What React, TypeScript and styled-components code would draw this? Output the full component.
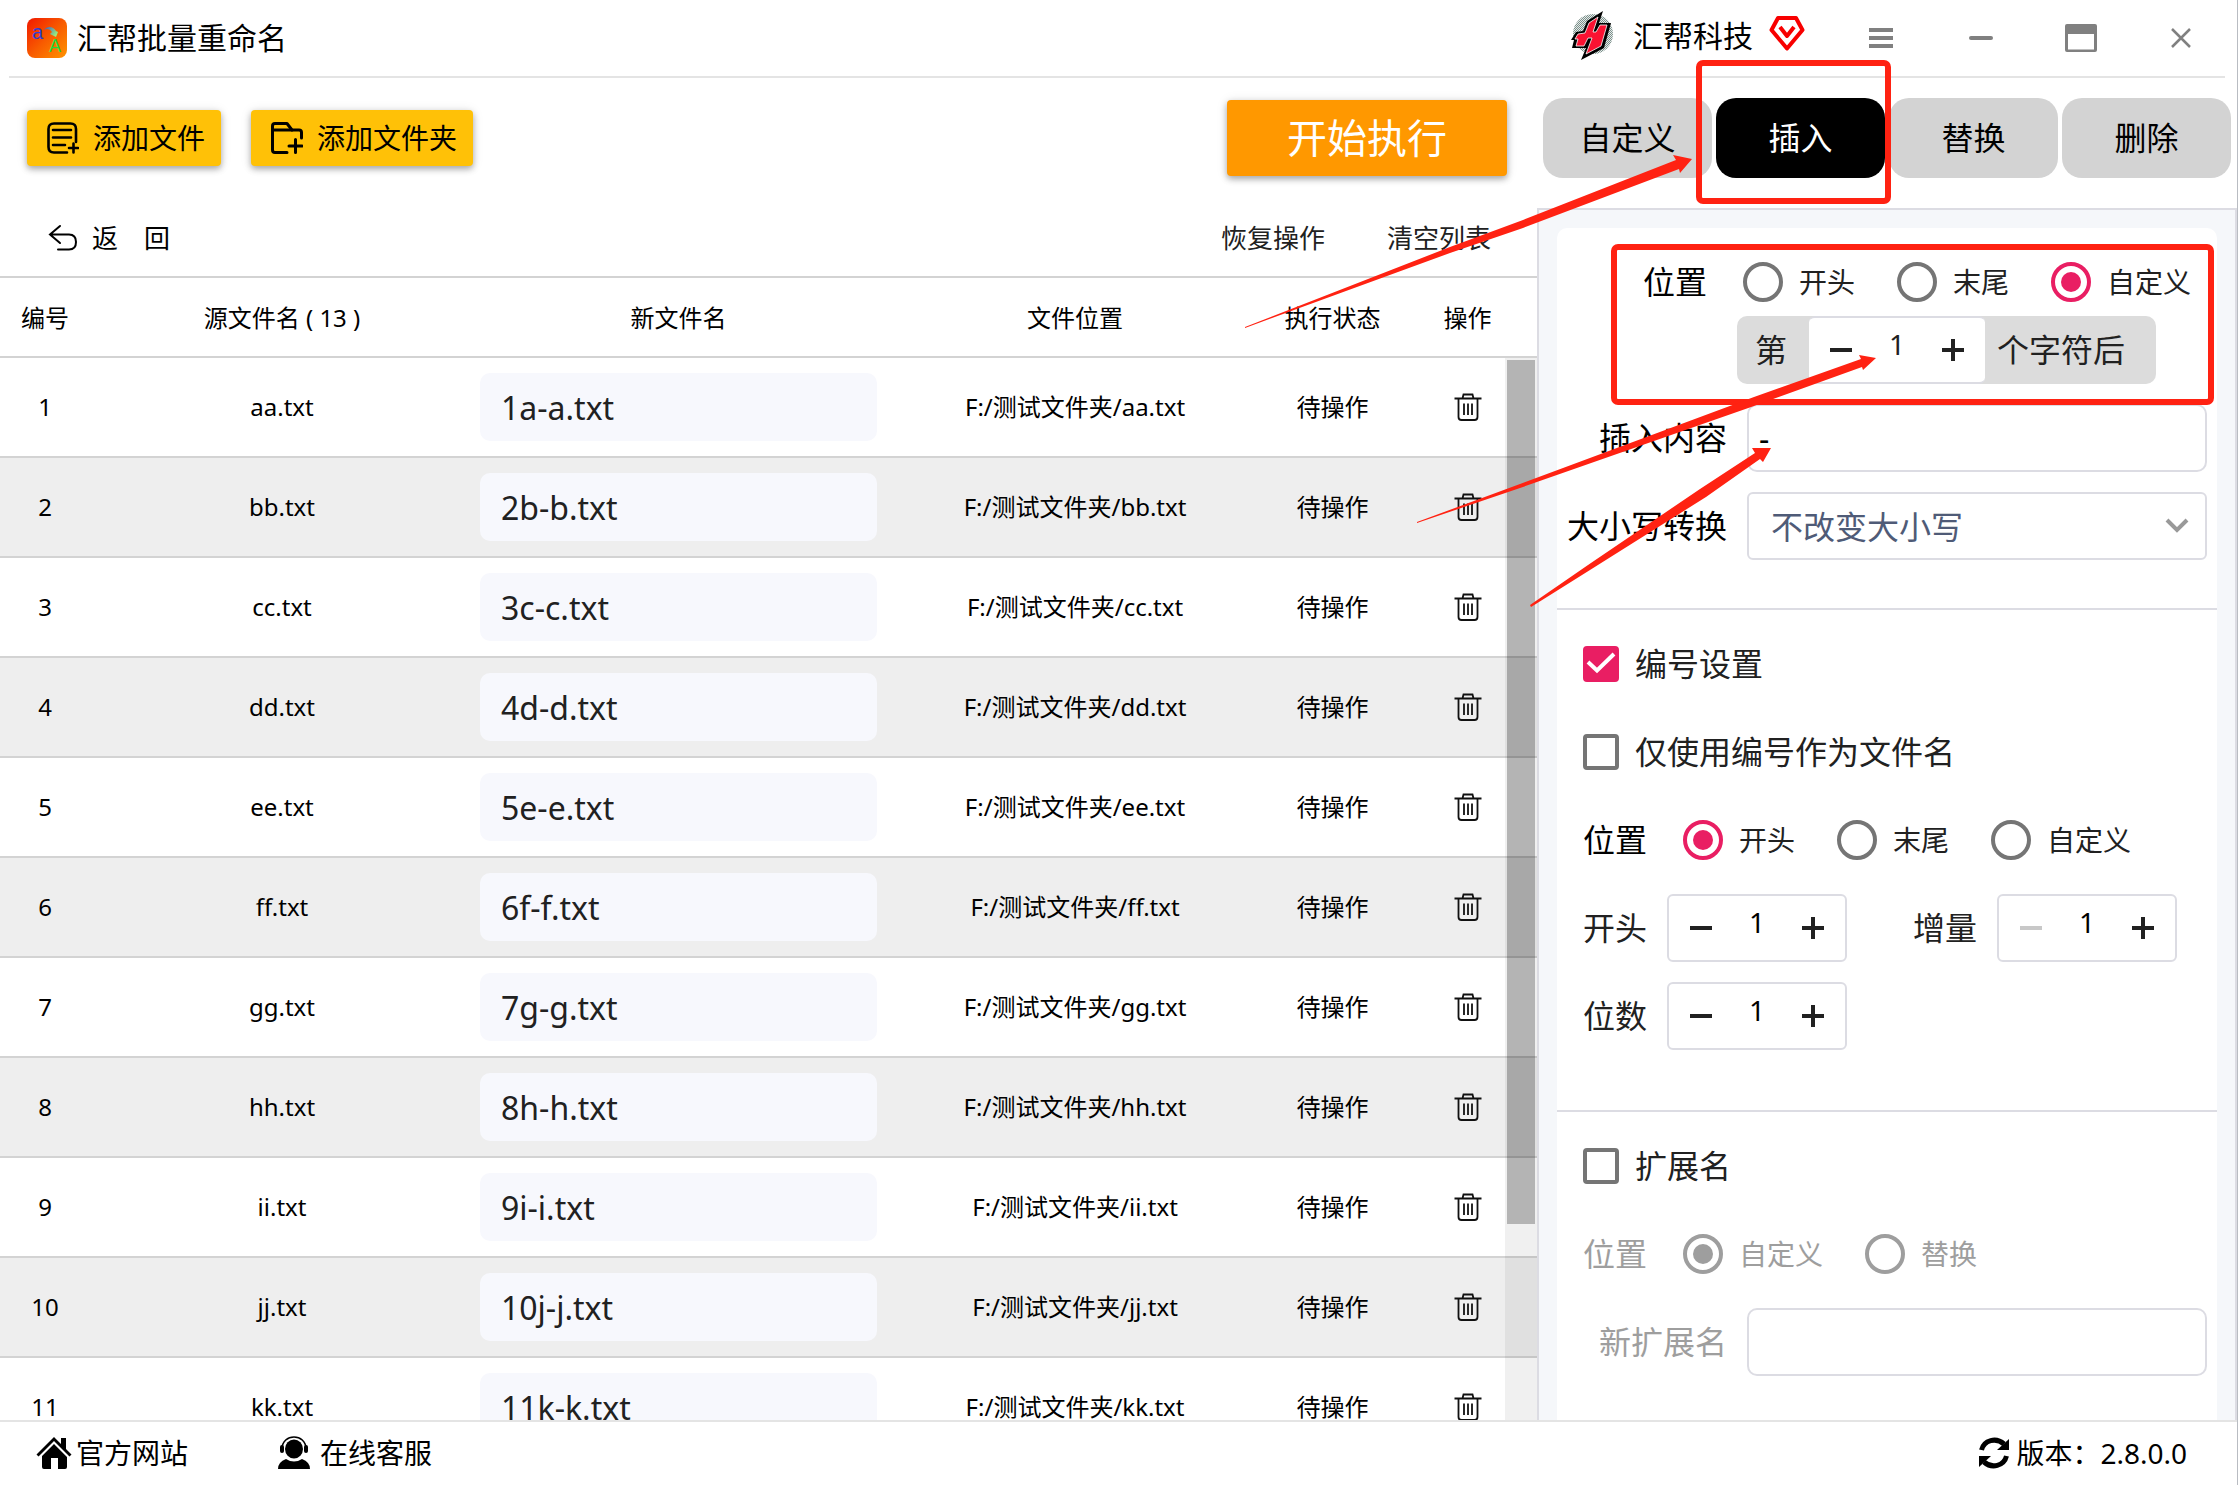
import React from "react";
import styled, { createGlobalStyle } from "styled-components";

const ink = "#212121";
const line = "#d3d3d3";
const panelLine = "#dcdce3";
const pink = "#e91e63";
const grey = "#757575";
const muted = "#9e9e9e";

const GlobalStyle = createGlobalStyle`
  *, *::before, *::after { box-sizing: border-box; }
  html, body, #root { height: 100%; }
  body {
    margin: 0;
    background: #fff;
    color: #000;
    font-family: "Noto Sans", "Noto Sans CJK SC", sans-serif;
    font-size: 24px;
    overflow: hidden;
  }
  button, input, select {
    font-family: inherit;
    color: inherit;
    margin: 0;
  }
  button { border: 0; padding: 0; background: none; cursor: pointer; }
  fieldset { border: 0; margin: 0; padding: 0; min-width: 0; }
`;

const Window = styled.div`
  position: relative;
  height: 100vh;
  display: flex;
  flex-direction: column;
  border-right: 1px solid #b9bcc2;
  white-space: nowrap;
`;

const TitleBar = styled.header`
  flex: none;
  height: 78px;
  margin: 0 12px 0 9px;
  padding: 0 24px 0 18px;
  border-bottom: 2px solid #e4e4e4;
  display: flex;
  align-items: center;
`;

const AppTitle = styled.h1`
  flex: 1;
  display: flex;
  align-items: center;
  gap: 10px;
  margin: 0;
  font-size: 30px;
  line-height: 40px;
  font-weight: 400;
`;

const Account = styled.a`
  display: flex;
  align-items: center;
  gap: 16px;
  padding-bottom: 4px;
  margin-right: 56px;
  font-size: 30px;
  line-height: 40px;
  color: #000;
  text-decoration: none;
`;

const AccountName = styled.span`
  margin-left: 2px;
`;

const WindowControls = styled.div`
  display: flex;
  gap: 60px;
`;

const WindowButton = styled.button`
  width: 40px;
  height: 40px;
  display: grid;
  place-items: center;
  color: #808080;
`;

const Body = styled.div`
  flex: 1;
  min-height: 0;
  display: flex;
`;

const Files = styled.main`
  flex: 1;
  min-width: 0;
  display: flex;
  flex-direction: column;
`;

const Toolbar = styled.div`
  flex: none;
  height: 120px;
  padding: 0 30px 0 27px;
  display: flex;
  align-items: center;
  gap: 30px;
`;

const AddButton = styled.button`
  height: 56px;
  padding: 0 16px 0 20px;
  display: flex;
  align-items: center;
  gap: 14px;
  border-radius: 4px;
  background: #ffc107;
  box-shadow: 0 3px 6px rgba(0, 0, 0, 0.3), 0 1px 12px rgba(0, 0, 0, 0.1);
  font-size: 28px;
  line-height: 40px;
`;

const StartButton = styled.button`
  width: 280px;
  height: 76px;
  margin-left: auto;
  border-radius: 4px;
  background: #ff9800;
  box-shadow: 0 3px 6px rgba(0, 0, 0, 0.3), 0 1px 12px rgba(0, 0, 0, 0.1);
  color: #fff;
  font-size: 40px;
  line-height: 56px;
`;

const SubBar = styled.div`
  flex: none;
  height: 80px;
  padding: 2px 46px 0 48px;
  border-bottom: 2px solid ${line};
  display: flex;
  align-items: center;
  gap: 62px;
`;

const TextButton = styled.button`
  display: flex;
  align-items: center;
  color: ${ink};
  font-size: 26px;
  line-height: 36px;
`;

const BackButton = styled(TextButton)`
  gap: 14px;
  margin-right: auto;
  color: #000;
  white-space: pre;
`;

const Table = styled.table`
  width: 100%;
  table-layout: fixed;
  border-collapse: separate;
  border-spacing: 0;
  text-align: center;
  font-size: 24px;
  line-height: 34px;
`;

const HeadCell = styled.th`
  height: 80px;
  padding: 2px 0 0;
  border-bottom: 2px solid ${line};
  font-weight: 400;
`;

const Row = styled.tr<{ $shaded: boolean }>`
  background: ${(p) => (p.$shaded ? "#eee" : "#fff")};
`;

const Cell = styled.td`
  height: 100px;
  padding: 0;
  border-bottom: 2px solid ${line};
`;

const ListArea = styled.div`
  position: relative;
  flex: 1;
  min-height: 0;
  overflow: hidden;
`;

const NameInput = styled.input`
  display: block;
  width: 397px;
  height: 68px;
  margin: 0 auto;
  padding: 0 21px;
  border: 0;
  border-radius: 10px;
  background: #f7f8fd;
  color: ${ink};
  font-size: 32px;
`;

const DeleteButton = styled.button`
  width: 40px;
  height: 40px;
  display: inline-grid;
  place-items: center;
  vertical-align: middle;
`;

const ScrollTrack = styled.div`
  position: absolute;
  top: 0;
  right: 0;
  bottom: 0;
  width: 32px;
  padding: 2px;
  background: rgba(0, 0, 0, 0.06);
`;

const ScrollThumb = styled.div`
  height: 864px;
  background: rgba(0, 0, 0, 0.25);
`;

const Side = styled.aside`
  flex: none;
  width: 700px;
  display: flex;
  flex-direction: column;
`;

const Tabs = styled.div`
  flex: none;
  height: 130px;
  padding: 20px 6px 0;
  display: flex;
  gap: 4px;
`;

const Tab = styled.button<{ $active?: boolean }>`
  flex: 1;
  height: 80px;
  border-radius: 20px;
  background: ${(p) => (p.$active ? "#000" : "#d3d3d3")};
  color: ${(p) => (p.$active ? "#fff" : "#000")};
  font-size: 32px;
  line-height: 44px;
`;

const Panel = styled.div`
  flex: 1;
  min-height: 0;
  overflow: hidden;
  padding: 18px;
  border: 2px solid ${panelLine};
  border-bottom: 0;
  background: #f5f7fa;
`;

const Card = styled.div`
  min-height: 1400px;
  border-radius: 10px;
  background: #fff;
`;

const Section = styled.section<{ $end: number }>`
  padding: 20px 10px ${(p) => p.$end}px;
  border-bottom: 2px solid ${panelLine};
  &:last-child { border-bottom: 0; }
`;

const Line = styled.div<{ $indent?: number; $tight?: boolean }>`
  height: 68px;
  margin-bottom: ${(p) => (p.$tight ? 0 : 20)}px;
  padding-left: ${(p) => p.$indent ?? 0}px;
  display: flex;
  align-items: center;
  &:last-child { margin-bottom: 0; }
`;

const FieldLabel = styled.label`
  width: 160px;
  margin-right: 20px;
  text-align: right;
  font-size: 32px;
  line-height: 44px;
`;

const MutedFieldLabel = styled(FieldLabel)`
  color: ${muted};
`;

const TextInput = styled.input`
  flex: 1;
  min-width: 0;
  height: 68px;
  padding: 0 10px;
  border: 2px solid ${panelLine};
  border-radius: 10px;
  background: #fff;
  font-size: 32px;
`;

const SelectWrap = styled.div`
  flex: 1;
  display: grid;
  align-items: center;
  & > * { grid-area: 1 / 1; }
  & > svg { justify-self: end; margin-right: 18px; pointer-events: none; }
`;

const Select = styled.select`
  appearance: none;
  width: 100%;
  height: 68px;
  padding: 0 22px;
  border: 2px solid ${panelLine};
  border-radius: 6px;
  background: #fff;
  color: #4f5b77;
  font-size: 32px;
`;

const RadioRow = styled.fieldset<{ $muted?: boolean }>`
  display: flex;
  align-items: center;
  gap: 42px;
  color: ${(p) => (p.$muted ? muted : ink)};
`;

const RadioTitle = styled.span<{ $muted?: boolean }>`
  margin-right: 36px;
  color: ${(p) => (p.$muted ? muted : "#000")};
  font-size: 32px;
  line-height: 44px;
`;

const RadioLabel = styled.label`
  display: flex;
  align-items: center;
  gap: 16px;
  font-size: 28px;
  line-height: 40px;
`;

const Radio = styled.input.attrs({ type: "radio" })`
  appearance: none;
  width: 40px;
  height: 40px;
  border: 4px solid ${grey};
  border-radius: 50%;
  display: grid;
  place-items: center;
  &:checked { border-color: ${pink}; }
  &:checked::before {
    content: "";
    width: 20px;
    height: 20px;
    border-radius: 50%;
    background: ${pink};
  }
  &:disabled { border-color: ${muted}; }
  &:disabled::before { background: ${muted}; }
`;

const CheckLabel = styled.label`
  display: flex;
  align-items: center;
  gap: 16px;
  color: ${ink};
  font-size: 32px;
  line-height: 44px;
`;

const CheckBox = styled.span`
  display: grid;
  width: 36px;
  height: 36px;
  & > * { grid-area: 1 / 1; }
  & > svg { pointer-events: none; }
`;

const CheckInput = styled.input.attrs({ type: "checkbox" })`
  appearance: none;
  width: 36px;
  height: 36px;
  border: 4px solid ${grey};
  border-radius: 4px;
  &:checked { border-color: ${pink}; background: ${pink}; }
`;

const StepBox = styled.div<{ $joined?: boolean }>`
  width: ${(p) => (p.$joined ? 176 : 180)}px;
  height: 68px;
  padding: 0 12px;
  border: 2px solid ${panelLine};
  border-width: ${(p) => (p.$joined ? "2px 0" : "2px")};
  border-radius: 6px;
  background: #fff;
  display: flex;
  align-items: center;
  justify-content: space-between;
`;

const StepButton = styled.button`
  width: 40px;
  height: 40px;
  display: grid;
  place-items: center;
  color: ${ink};
  &:disabled { color: #c8c8c8; }
`;

const StepValue = styled.input`
  flex: 1;
  min-width: 0;
  height: 48px;
  margin-bottom: 12px;
  padding: 0;
  border: 0;
  background: none;
  text-align: center;
  font-size: 28px;
`;

const StepLabel = styled.label<{ $push?: boolean }>`
  margin-left: ${(p) => (p.$push ? 66 : 0)}px;
  margin-right: 20px;
  color: ${ink};
  font-size: 32px;
  line-height: 44px;
`;

const StepGroup = styled.div`
  height: 68px;
  display: flex;
  border-radius: 10px;
  background: #dcdcdc;
  overflow: hidden;
  color: ${ink};
  font-size: 32px;
  line-height: 68px;
`;

const StepCaption = styled.label<{ $before: number; $after: number }>`
  padding: 0 ${(p) => p.$after}px 0 ${(p) => p.$before}px;
`;

const Footer = styled.footer`
  flex: none;
  height: 65px;
  padding: 0 50px 2px 36px;
  border-top: 2px solid #e4e4e4;
  background: #fff;
  display: flex;
  align-items: center;
  gap: 90px;
  font-size: 28px;
  line-height: 40px;
`;

const FooterLink = styled.a<{ $gap: number }>`
  display: flex;
  align-items: center;
  gap: ${(p) => p.$gap}px;
  color: #000;
  text-decoration: none;
`;

const Version = styled.div`
  margin-left: auto;
  display: flex;
  align-items: center;
  gap: 6px;
`;

const Markup = styled.svg`
  position: absolute;
  top: 0;
  left: 0;
  pointer-events: none;
`;

function AppLogo() {
  return (
    <svg width="40" height="40" viewBox="0 0 40 40" aria-hidden="true">
      <defs>
        <linearGradient id="appBg" x1="0" y1="0" x2="1" y2="1">
          <stop offset="0" stopColor="#f01800" />
          <stop offset="0.5" stopColor="#f85a00" />
          <stop offset="1" stopColor="#ff9400" />
        </linearGradient>
        <linearGradient id="appArrow" x1="0" y1="0" x2="1" y2="0.6">
          <stop offset="0" stopColor="#3a55c8" />
          <stop offset="1" stopColor="#9cf07a" />
        </linearGradient>
      </defs>
      <rect width="40" height="40" rx="8" fill="url(#appBg)" />
      <text x="5" y="21" fontFamily="Liberation Sans" fontSize="20" fill="#2e3fd6">a</text>
      <text x="22" y="34" fontFamily="Liberation Sans" fontSize="18" fill="#1fdc3a">A</text>
      <path d="M17 12 C20 8 26 8 29 13 L31 14 L29 19 L23 16 L25 14 C23 11 20 10 17 12 Z" fill="url(#appArrow)" />
    </svg>
  );
}

function BrandLogo() {
  return (
    <svg width="44" height="50" viewBox="0 0 44 50" aria-hidden="true">
      <defs>
        <pattern id="mesh" width="2" height="2" patternUnits="userSpaceOnUse">
          <rect width="2" height="2" fill="#e4ebe9" />
          <rect width="1" height="1" fill="#7d8f8b" />
          <rect x="1" y="1" width="1" height="1" fill="#7d8f8b" />
        </pattern>
      </defs>
      <circle cx="22" cy="23" r="20" fill="url(#mesh)" />
      <path d="M32 0 L16 10 L12 20 L5 21 L0 29 L3 29 L1 37 L15 37 L10 49 L33 37 L40 12 L28 12 Z" fill="#000" />
      <path d="M27 6 L18 12 L14 22 L7 23 L4 28 L7 28 L5 35 L13 35 L17 27 L21 27 L15 43 L30 35 L36 14 L29 14 L25 21 L22 21 Z" fill="#fa1232" stroke="#fff" strokeWidth="0.8" />
    </svg>
  );
}

function Vip() {
  return (
    <svg width="36" height="40" viewBox="0 0 36 40" fill="none" stroke="#f80000" strokeWidth="4" strokeLinejoin="round" aria-hidden="true">
      <path d="M9 2 H27 L33.500 14 L18 32.500 L2.500 14 Z" />
      <path d="M11 11 L18 20 L25 11" />
    </svg>
  );
}

const FileAdd = () => (
  <svg width="32" height="32" viewBox="0 0 32 32" fill="none" stroke="#000" strokeWidth="2.600" strokeLinecap="round" aria-hidden="true">
    <path d="M29 20 V7 Q29 1.500 23.500 1.500 H7 Q1.500 1.500 1.500 7 V25 Q1.500 30.500 7 30.500 H20" />
    <path d="M6 8 H24 M6 15.500 H24 M6 23 H18 M22 26 H31 M26.500 21.500 V30.500" />
  </svg>
);

const FolderAdd = () => (
  <svg width="32" height="32" viewBox="0 0 32 32" fill="none" stroke="#000" strokeWidth="3" strokeLinecap="round" strokeLinejoin="round" aria-hidden="true">
    <path d="M16 30.500 H4 Q1.500 30.500 1.500 28 V4 Q1.500 1.500 4 1.500 H16 L21 8 H28 Q30.500 8 30.500 10.500 V16" />
    <path d="M2 8 H21 M18 24 H31 M24.500 17.500 V30.500" />
  </svg>
);

const BackArrow = () => (
  <svg width="30" height="28" viewBox="0 0 30 28" fill="none" stroke="#000" strokeWidth="2" strokeLinecap="round" aria-hidden="true">
    <path d="M12 2 L2 10.500 L12 19 M2 10.500 H21 Q28 10.500 28 18 Q28 25.500 21 25.500 H10" />
  </svg>
);

const Trash = () => (
  <svg width="28" height="28" viewBox="0 0 28 28" fill="none" stroke="#111" strokeWidth="1.800" aria-hidden="true">
    <path d="M0.500 5.500 H27.500 M8.500 5.500 L9.500 1.500 H18.500 L19.500 5.500" />
    <path d="M4.500 6 V24 Q4.500 27 7.500 27 H20.500 Q23.500 27 23.500 24 V6" />
    <path d="M10 10.500 V22 M14 10.500 V22 M18 10.500 V22" />
  </svg>
);

const Minus = () => (
  <svg width="24" height="24" viewBox="0 0 24 24" aria-hidden="true">
    <path d="M1 10 H23 V14 H1 Z" fill="currentColor" />
  </svg>
);

const Plus = () => (
  <svg width="24" height="24" viewBox="0 0 24 24" aria-hidden="true">
    <path d="M1 10 H10 V1 H14 V10 H23 V14 H14 V23 H10 V14 H1 Z" fill="currentColor" />
  </svg>
);

const Home = () => (
  <svg width="36" height="34" viewBox="0 0 36 34" aria-hidden="true">
    <path d="M18 1 L25 8 V2 H30 V13 L35.500 18.500 L33.500 20.500 L18 5 L2.500 20.500 L0.500 18.500 Z" fill="#000" />
    <path d="M18 8 L31 21 V31 Q31 33 29 33 H22 V22 H15 V33 H8 Q6 33 6 31 V20 Z" fill="#000" />
  </svg>
);

const Agent = () => (
  <svg width="32" height="34" viewBox="0 0 32 34" aria-hidden="true">
    <path d="M4 13 C4 -3 28 -3 28 13" fill="none" stroke="#000" strokeWidth="1.600" />
    <ellipse cx="16" cy="13" rx="9" ry="9.500" fill="#000" />
    <rect x="2" y="9" width="4" height="8" rx="2" fill="#000" />
    <rect x="26" y="9" width="4" height="8" rx="2" fill="#000" />
    <path d="M0 33 Q0 26 8 23 Q16 28 24 23 Q32 26 32 33 Z" fill="#000" />
  </svg>
);

const Refresh = () => (
  <svg width="32" height="32" viewBox="0 0 32 32" aria-hidden="true">
    <path d="M3.500 13 C6 3 18 0 26 7" fill="none" stroke="#000" strokeWidth="5" />
    <path d="M31 2 V13 H19 Z" fill="#000" />
    <path d="M28.500 19 C26 29 14 32 6 25" fill="none" stroke="#000" strokeWidth="5" />
    <path d="M1 30 V19 H13 Z" fill="#000" />
  </svg>
);

const columns = [90, 384, 409, 384, 131, 139];

function Columns() {
  return (
    <colgroup>
      {columns.map((w, i) => (
        <col key={i} width={`${(w / 1537) * 100}%`} />
      ))}
    </colgroup>
  );
}

const headings = ["编号", "源文件名 ( 13 )", "新文件名", "文件位置", "执行状态", "操作"];
const files = "abcdefghijk".split("").map((c, i) => ({
  no: i + 1,
  source: `${c}${c}.txt`,
  renamed: `${i + 1}${c}-${c}.txt`,
}));

function Choices(props: { title: string; name: string; options: string[]; value: string; disabled?: boolean }) {
  const { title, name, options, value, disabled } = props;
  return (
    <>
      <RadioTitle $muted={disabled}>{title}</RadioTitle>
      <RadioRow $muted={disabled} aria-label={title}>
        {options.map((o) => (
          <RadioLabel key={o}>
            <Radio name={name} value={o} defaultChecked={o === value} disabled={disabled} />
            {o}
          </RadioLabel>
        ))}
      </RadioRow>
    </>
  );
}

function Check({ text, checked }: { text: string; checked?: boolean }) {
  return (
    <CheckLabel>
      <CheckBox>
        <CheckInput defaultChecked={checked} />
        {checked && (
          <svg width="36" height="36" viewBox="0 0 36 36" fill="none" stroke="#fff" strokeWidth="4" aria-hidden="true">
            <path d="M5 16 L14 24.500 L31 8" />
          </svg>
        )}
      </CheckBox>
      {text}
    </CheckLabel>
  );
}

function Stepper({ id, joined, atMin }: { id: string; joined?: boolean; atMin?: boolean }) {
  return (
    <StepBox $joined={joined}>
      <StepButton aria-label="减少" disabled={atMin}><Minus /></StepButton>
      <StepValue id={id} defaultValue="1" />
      <StepButton aria-label="增加"><Plus /></StepButton>
    </StepBox>
  );
}

export default function App() {
  return (
    <>
      <GlobalStyle />
      <Window>
        <TitleBar>
          <AppTitle><AppLogo />汇帮批量重命名</AppTitle>
          <Account href="#account">
            <BrandLogo />
            <AccountName>汇帮科技</AccountName>
            <Vip />
          </Account>
          <WindowControls>
            <WindowButton aria-label="菜单">
              <svg width="24" height="20" viewBox="0 0 24 20"><path d="M0 0 H24 V4 H0 Z M0 8 H24 V12 H0 Z M0 16 H24 V20 H0 Z" fill="currentColor" /></svg>
            </WindowButton>
            <WindowButton aria-label="最小化">
              <svg width="24" height="4" viewBox="0 0 24 4"><rect width="24" height="4" rx="2" fill="currentColor" /></svg>
            </WindowButton>
            <WindowButton aria-label="最大化">
              <svg width="32" height="28" viewBox="0 0 32 28"><path fillRule="evenodd" d="M2 0 H30 Q32 0 32 2 V26 Q32 28 30 28 H2 Q0 28 0 26 V2 Q0 0 2 0 Z M3 10 V25.500 H29 V10 Z" fill="currentColor" /></svg>
            </WindowButton>
            <WindowButton aria-label="关闭">
              <svg width="20" height="20" viewBox="0 0 20 20" stroke="currentColor" strokeWidth="2.500"><path d="M1 1 L19 19 M19 1 L1 19" /></svg>
            </WindowButton>
          </WindowControls>
        </TitleBar>

        <Body>
          <Files>
            <Toolbar>
              <AddButton><FileAdd />添加文件</AddButton>
              <AddButton><FolderAdd />添加文件夹</AddButton>
              <StartButton>开始执行</StartButton>
            </Toolbar>
            <SubBar>
              <BackButton><BackArrow />{"返\u3000回"}</BackButton>
              <TextButton>恢复操作</TextButton>
              <TextButton>清空列表</TextButton>
            </SubBar>
            <Table>
              <Columns />
              <thead>
                <tr>{headings.map((h) => <HeadCell key={h} scope="col">{h}</HeadCell>)}</tr>
              </thead>
            </Table>
            <ListArea>
              <Table>
                <Columns />
                <tbody>
                  {files.map((f) => (
                    <Row key={f.no} $shaded={f.no % 2 === 0}>
                      <Cell>{f.no}</Cell>
                      <Cell>{f.source}</Cell>
                      <Cell><NameInput aria-label="新文件名" defaultValue={f.renamed} /></Cell>
                      <Cell>F:/测试文件夹/{f.source}</Cell>
                      <Cell>待操作</Cell>
                      <Cell><DeleteButton aria-label="删除"><Trash /></DeleteButton></Cell>
                    </Row>
                  ))}
                </tbody>
              </Table>
              <ScrollTrack><ScrollThumb /></ScrollTrack>
            </ListArea>
          </Files>

          <Side>
            <Tabs>
              <Tab>自定义</Tab>
              <Tab $active>插入</Tab>
              <Tab>替换</Tab>
              <Tab>删除</Tab>
            </Tabs>
            <Panel>
              <Card>
                <Section $end={48}>
                  <Line $indent={76} $tight>
                    <Choices title="位置" name="insert" options={["开头", "末尾", "自定义"]} value="自定义" />
                  </Line>
                  <Line $indent={170}>
                    <StepGroup>
                      <StepCaption htmlFor="charIndex" $before={18} $after={22}>第</StepCaption>
                      <Stepper id="charIndex" joined />
                      <StepCaption htmlFor="charIndex" $before={12} $after={31}>个字符后</StepCaption>
                    </StepGroup>
                  </Line>
                  <Line>
                    <FieldLabel htmlFor="content">插入内容</FieldLabel>
                    <TextInput id="content" defaultValue="-" />
                  </Line>
                  <Line>
                    <FieldLabel htmlFor="case">大小写转换</FieldLabel>
                    <SelectWrap>
                      <Select id="case"><option>不改变大小写</option></Select>
                      <svg width="24" height="16" viewBox="0 0 24 16" fill="none" stroke="#999" strokeWidth="4" aria-hidden="true"><path d="M2 2 L12 12 L22 2" /></svg>
                    </SelectWrap>
                  </Line>
                </Section>
                <Section $end={60}>
                  <Line $indent={16}><Check text="编号设置" checked /></Line>
                  <Line $indent={16}><Check text="仅使用编号作为文件名" /></Line>
                  <Line $indent={16}>
                    <Choices title="位置" name="number" options={["开头", "末尾", "自定义"]} value="开头" />
                  </Line>
                  <Line $indent={16}>
                    <StepLabel htmlFor="start">开头</StepLabel>
                    <Stepper id="start" />
                    <StepLabel htmlFor="step" $push>增量</StepLabel>
                    <Stepper id="step" atMin />
                  </Line>
                  <Line $indent={16}>
                    <StepLabel htmlFor="digits">位数</StepLabel>
                    <Stepper id="digits" />
                  </Line>
                </Section>
                <Section $end={60}>
                  <Line $indent={16}><Check text="扩展名" /></Line>
                  <Line $indent={16}>
                    <Choices title="位置" name="extension" options={["自定义", "替换"]} value="自定义" disabled />
                  </Line>
                  <Line>
                    <MutedFieldLabel htmlFor="ext">新扩展名</MutedFieldLabel>
                    <TextInput id="ext" disabled />
                  </Line>
                </Section>
              </Card>
            </Panel>
          </Side>
        </Body>

        <Footer>
          <FooterLink href="#site" $gap={4}><Home />官方网站</FooterLink>
          <FooterLink href="#support" $gap={10}><Agent />在线客服</FooterLink>
          <Version><Refresh /><span>版本：2.8.0.0</span></Version>
        </Footer>

        <Markup width="2238" height="1485" viewBox="0 0 2238 1485" fill="#ff2212" aria-hidden="true">
          <g fill="none" stroke="#ff2212" strokeWidth="6">
            <rect x="1699" y="63" width="189" height="138" rx="4" />
            <rect x="1614" y="247" width="597" height="155" rx="4" />
          </g>
          <path d="M1245 327 L1450 247 L1523 220 L1676 160 L1673 155 L1692 159 L1680 173 L1679 169 L1523 228 L1450 253 L1245 328 Z" />
          <path d="M1417 522 L1520 484 L1754 397 L1861 359 L1859 355 L1876 358 L1863 370 L1862 367 L1754 406 L1520 488 L1417 523 Z" />
          <path d="M1530 605 L1588 565 L1700 489 L1755 453 L1752 448 L1771 448 L1763 462 L1760 459 L1706 497 L1590 570 L1531 607 Z" />
        </Markup>
      </Window>
    </>
  );
}
